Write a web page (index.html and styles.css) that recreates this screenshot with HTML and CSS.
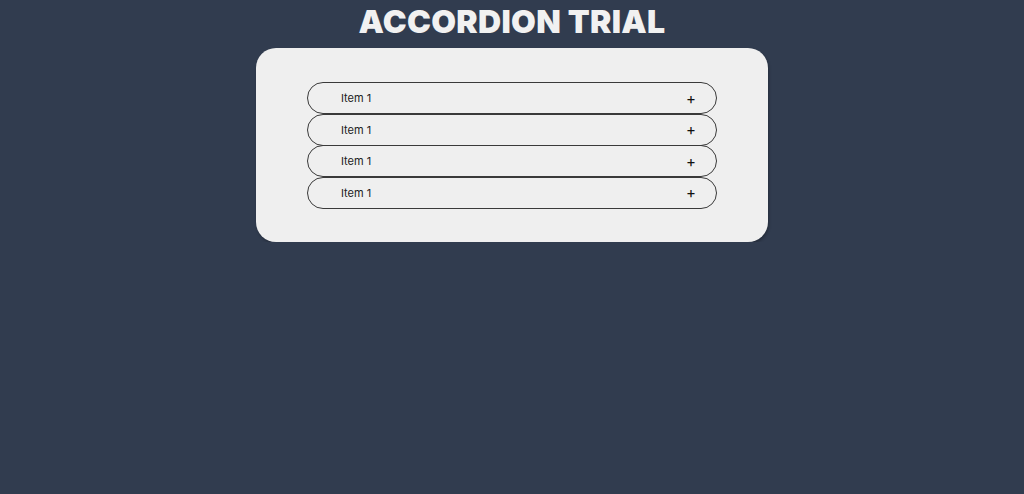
FILE: index.html
```html
<!DOCTYPE html>
<html>
<head>
<meta charset="utf-8">
<link rel="stylesheet" href="styles.css">
</head>
<body>
<h1 class="title">ACCORDION TRIAL</h1>
<div class="card">
  <div class="item"><span class="label">Item 1</span><span class="plus">+</span></div>
  <div class="item"><span class="label">Item 1</span><span class="plus">+</span></div>
  <div class="item"><span class="label">Item 1</span><span class="plus">+</span></div>
  <div class="item"><span class="label">Item 1</span><span class="plus">+</span></div>
</div>
</body>
</html>
```
FILE: styles.css
```css
html, body {
  margin: 0;
  padding: 0;
  background: #313c4f;
  font-family: "Inter", "Open Sans", sans-serif;
}
body {
  display: flex;
  flex-direction: column;
  align-items: center;
}
.title {
  margin: 2px 0 6px;
  font-size: 32px;
  line-height: 40px;
  font-weight: 900;
  color: #f1f1f1;
  letter-spacing: 0.3px;
}
.card {
  width: 512px;
  box-sizing: border-box;
  background: #efefef;
  border-radius: 20px;
  padding: 34px 51px 33px;
  display: flex;
  flex-direction: column;
  box-shadow: 1px 2px 3px rgba(0,0,0,0.25);
}
.item {
  height: 32px;
  box-sizing: border-box;
  border: 1px solid #3a3a3a;
  border-radius: 16px;
  display: flex;
  align-items: center;
  justify-content: space-between;
  padding: 0 20px 0 33px;
  font-size: 11px;
  color: #222;
}
.item + .item {
  margin-top: -0.5px;
}
.plus {
  font-size: 15px;
  font-weight: 400;
  color: #111;
}
```
